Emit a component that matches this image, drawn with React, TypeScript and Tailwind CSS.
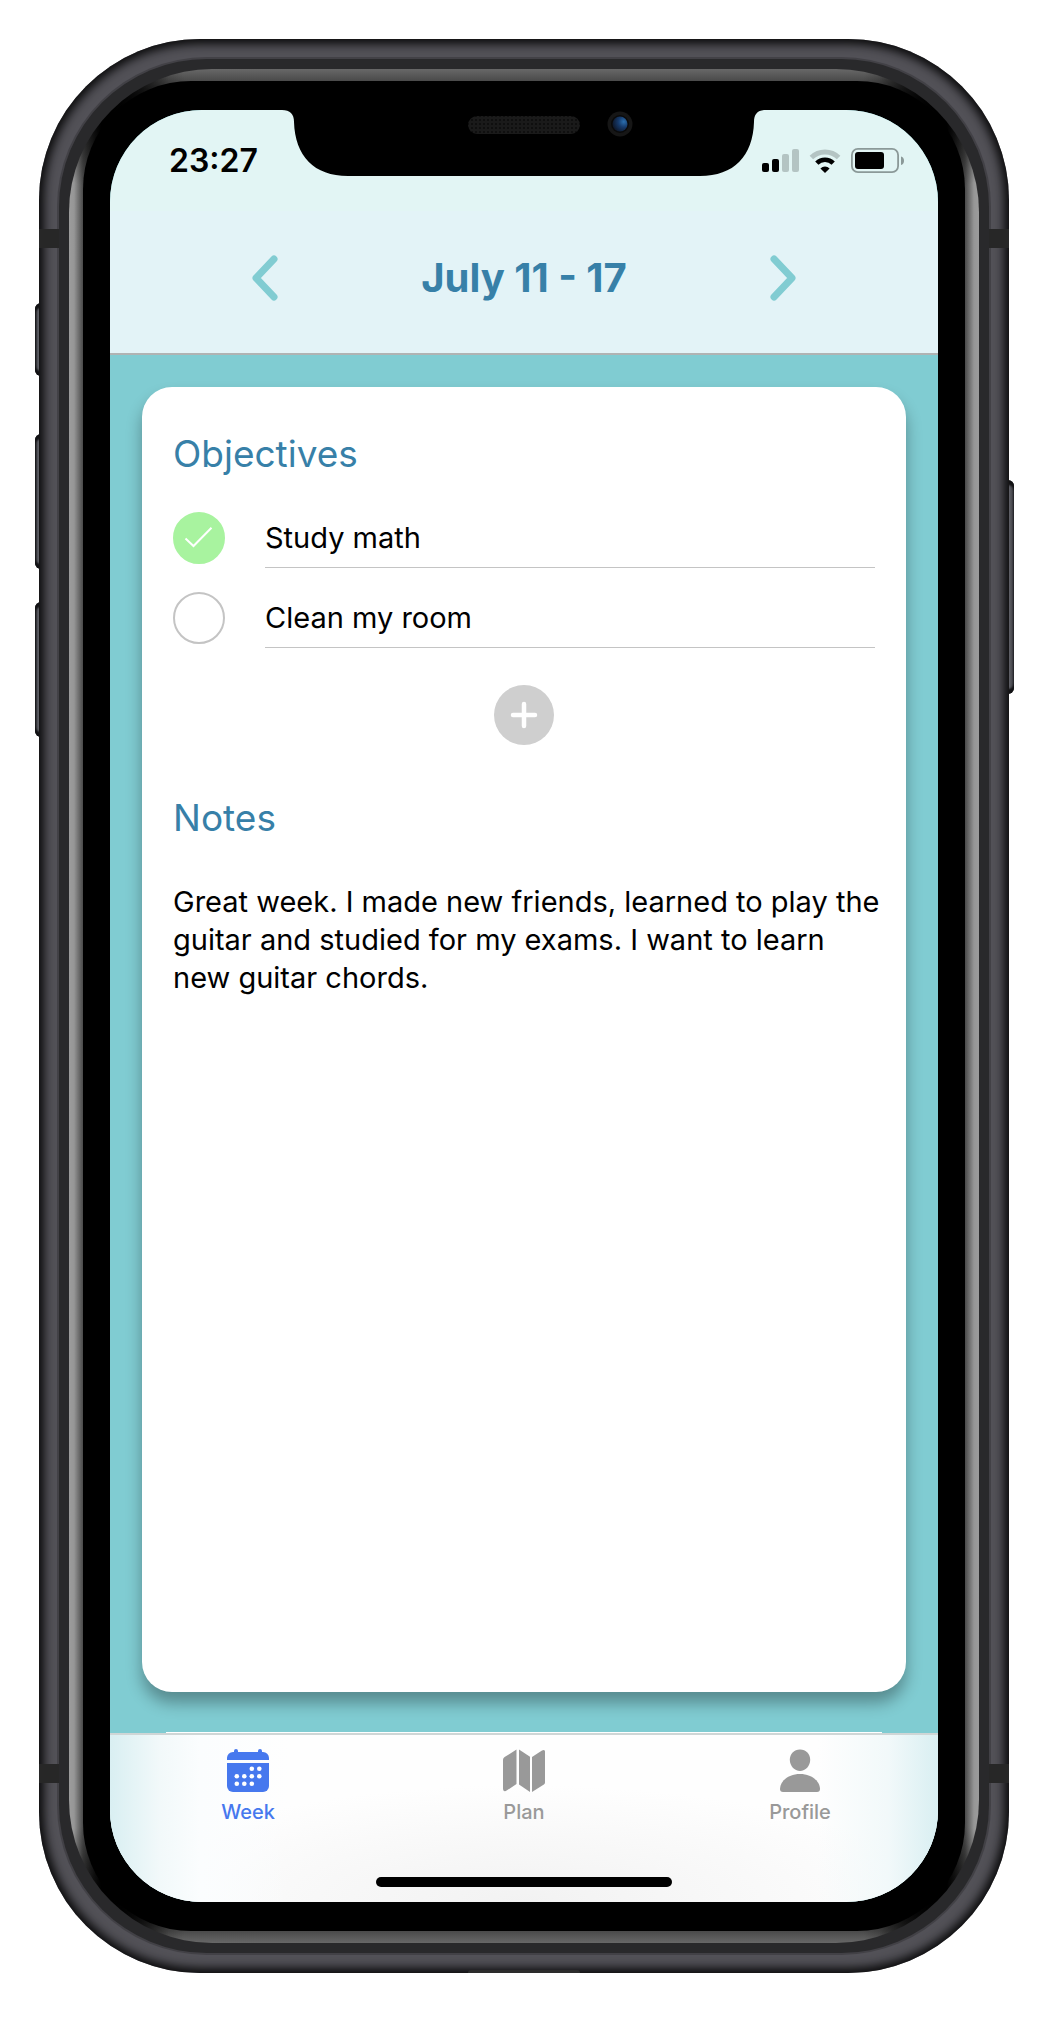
import { useState } from "react";
import type { ReactNode } from "react";

function SignalIcon() {
  return (
    <svg width="37" height="23" viewBox="0 0 37 23" aria-label="Signal">
      <rect x="0" y="14" width="7" height="9" rx="2" fill="#000" />
      <rect x="10" y="10" width="7" height="13" rx="2" fill="#000" />
      <rect x="20" y="5" width="7" height="18" rx="2" fill="#b4c4c3" />
      <rect x="30" y="0" width="7" height="23" rx="2" fill="#b4c4c3" />
    </svg>
  );
}

function WifiIcon() {
  return (
    <svg width="32" height="24" viewBox="0 0 32 24" aria-label="Wi-Fi">
      <path d="M2.4 8.6a19.3 19.3 0 0 1 27.2 0" fill="none" stroke="#b4c4c3" strokeWidth="5" />
      <path d="M7.8 14.2a11.6 11.6 0 0 1 16.4 0" fill="none" stroke="#000" strokeWidth="4.6" />
      <path d="M16 24l-4.6-4.6a6.5 6.5 0 0 1 9.2 0z" fill="#000" />
    </svg>
  );
}

function BatteryIcon() {
  return (
    <svg width="53" height="25" viewBox="0 0 53 25" aria-label="Battery">
      <rect x="0.9" y="0.9" width="46.2" height="23.2" rx="6" fill="none" stroke="#8b9998" strokeWidth="1.8" />
      <rect x="4" y="4" width="29" height="17" rx="3" fill="#000" />
      <path d="M50 8.5c4 1 4 7.500 0 8.500z" fill="#8b9998" />
    </svg>
  );
}

function Notch() {
  return (
    <svg className="absolute inset-x-0 top-0 mx-auto" width="484" height="66" viewBox="0 0 484 66" aria-hidden="true">
      <defs>
        <pattern id="mesh" width="4" height="4" patternUnits="userSpaceOnUse">
          <rect width="4" height="4" fill="#1a1a1a" />
          <circle cx="2" cy="2" r="1.100" fill="#0c0c0c" />
        </pattern>
        <radialGradient id="lens" cx="0.75" cy="0.35" r="0.8">
          <stop offset="0" stopColor="#2b6fae" />
          <stop offset="0.45" stopColor="#163a6b" />
          <stop offset="1" stopColor="#0d1526" />
        </radialGradient>
      </defs>
      <path d="M0 0C8 0 12 4 12 12C13 46 32 66 66 66H418C452 66 471 46 472 12C472 4 476 0 484 0Z" />
      <rect x="186" y="6" width="112" height="18" rx="9" fill="url(#mesh)" />
      <circle cx="338" cy="14" r="12.500" fill="#161616" />
      <circle cx="338" cy="14" r="9" fill="#0a0a0a" />
      <circle cx="338" cy="14" r="7.500" fill="url(#lens)" />
    </svg>
  );
}

function Chevron({ points }: { points: string }) {
  return (
    <svg width="26" height="46" viewBox="0 0 26 46" aria-hidden="true">
      <polyline points={points} fill="none" stroke="#81ccd2" strokeWidth="7" strokeLinecap="round" strokeLinejoin="round" />
    </svg>
  );
}

const calendarDots = [
  [25, 19], [32.5, 19],
  [10, 26.500], [17.500, 26.500], [25, 26.500], [32.500, 26.500],
  [10, 34], [17.500, 34], [25, 34],
];

function CalendarIcon() {
  return (
    <svg width="44" height="44" viewBox="0 0 44 44" fill="currentColor" aria-hidden="true">
      <path d="M1 11V9a6 6 0 0 1 6-6h1V2a2 2 0 0 1 4 0v1h20V2a2 2 0 0 1 4 0v1h1a6 6 0 0 1 6 6v2z" />
      <path d="M1 14h42v23a6 6 0 0 1-6 6H7a6 6 0 0 1-6-6z" />
      {calendarDots.map(([x, y]) => (
        <circle key={`${x}-${y}`} cx={x + 0.800} cy={y + 0.800} r="2.300" fill="#fff" />
      ))}
    </svg>
  );
}

function MapIcon() {
  return (
    <svg width="44" height="44" viewBox="0 0 44 44" fill="currentColor" aria-hidden="true">
      <path d="M14.500 0.500V35L5 41.300C2.500 43 1 42 1 39.500V11.500C1 9.500 1.500 8.800 3 7.800z" />
      <path d="M17 0.500L28 7.800V43L17 35.500z" />
      <path d="M30 43V8L40 1.600C42 .5 43 1.200 43 3V33C43 34.500 42.500 35 41.500 35.700z" />
    </svg>
  );
}

function PersonIcon() {
  return (
    <svg width="44" height="44" viewBox="0 0 44 44" fill="currentColor" aria-hidden="true">
      <path d="M22 0.500c6 0 10.200 4.500 10.200 10.300C32.200 17 27.500 22 22 22S11.800 17 11.800 10.800C11.800 5 16 .5 22 .5z" />
      <path d="M22 25c12 0 20 7.500 20 15 0 2-1 3-3 3H5c-2 0-3-1-3-3 0-7.500 8-15 20-15z" />
    </svg>
  );
}

function Objective({ label, initial }: { label: string; initial: boolean }) {
  const [done, setDone] = useState(initial);
  const [text, setText] = useState(label);
  return (
    <li className="flex items-start gap-10">
      <span className="relative grid size-13 shrink-0">
        <input
          type="checkbox"
          aria-label={text}
          checked={done}
          onChange={() => setDone(!done)}
          className="size-13 appearance-none rounded-full border-2 border-[#c4c4c4] bg-white checked:border-[#a8f39f] checked:bg-[#a8f39f]"
        />
        {done && (
          <svg className="pointer-events-none absolute inset-0" width="52" height="52" viewBox="0 0 52 52" aria-hidden="true">
            <path d="M12.500 26.500l8 7.500L38.500 15.800" fill="none" stroke="#fff" strokeWidth="2" />
          </svg>
        )}
      </span>
      <input
        type="text"
        aria-label="Objective"
        value={text}
        onChange={(e) => setText(e.target.value)}
        className="h-14 min-w-0 flex-1 border-b border-[#c4c4c4] bg-transparent pb-1 text-[29px] text-black outline-none"
      />
    </li>
  );
}

function Tab({ icon, label, active = false }: { icon: ReactNode; label: string; active?: boolean }) {
  return (
    <a
      href={`#${label.toLowerCase()}`}
      aria-current={active ? "page" : undefined}
      className={`flex flex-1 flex-col items-center gap-[7px] ${active ? "text-[#4678ee]" : "text-[#999999]"}`}
    >
      {icon}
      <span className="text-xl leading-6 font-medium">{label}</span>
    </a>
  );
}

function SideButton({ className }: { className: string }) {
  return (
    <span
      aria-hidden="true"
      className={`absolute w-2 bg-[linear-gradient(to_right,#1b1b1d,#5f6067_40%,#3a3a3e)] shadow-[inset_0_5px_2px_#121214,inset_0_-5px_2px_#121214] ${className}`}
    />
  );
}

function AntennaLine({ className }: { className: string }) {
  return <span aria-hidden="true" className={`absolute h-[19px] w-5 bg-[#272727] ${className}`} />;
}

export default function App() {
  return (
    <div className="bg-white p-[39px] font-[Inter,sans-serif] text-black">
      <div className="relative">
        <SideButton className="top-[264px] -left-1 h-[73px] rounded-l-md" />
        <SideButton className="top-[395px] -left-1 h-[135px] rounded-l-md" />
        <SideButton className="top-[563px] -left-1 h-[135px] rounded-l-md" />
        <SideButton className="top-[441px] -right-[5px] h-[214px] rounded-r-md" />

        <div className="relative rounded-[161px] bg-[#525157] p-5 shadow-[inset_0_0_10px_5px_#0b0b0c]">
          <span className="absolute inset-x-0 bottom-0 mx-auto h-[3px] w-[112px] rounded-t-full bg-[#2c2c2c]" />

          <div className="relative rounded-[148px] bg-[#29292b] p-2.5 shadow-[0_0_0_2px_#424146]">
            <div className="rounded-[143px] bg-[radial-gradient(circle_at_36px_36px,#000000cc,transparent_84px),radial-gradient(circle_at_calc(100%-36px)_36px,#000000cc,transparent_84px),radial-gradient(circle_at_36px_calc(100%-36px),#000000cc,transparent_84px),radial-gradient(circle_at_calc(100%-36px)_calc(100%-36px),#000000cc,transparent_84px),linear-gradient(to_right,#9c9c9c,#969696_5px,#4a4a4a_14px,#000_32px,#000_44px,transparent_100px,transparent_calc(100%-100px),#000_calc(100%-44px),#000_calc(100%-32px),#4a4a4a_calc(100%-14px),#969696_calc(100%-5px),#9c9c9c),linear-gradient(to_bottom,#686868,#4a4a4a_12px,#111_40px,#111_calc(100%-40px),#4a4a4a_calc(100%-12px),#686868)] px-3.5 py-3">
              <div className="rounded-[108px] bg-black px-[27px] py-[29px]">
                <div className="relative flex flex-col overflow-hidden rounded-[92px] bg-[#80ccd2]">
                  <Notch />

                  <div className="flex h-[101px] items-center justify-between bg-[#e2f5f4] pr-[34px] pl-[59px]">
                    <time className="text-[32px] font-semibold">23:27</time>
                    <div className="flex items-center gap-2.5">
                      <SignalIcon />
                      <WifiIcon />
                      <BatteryIcon />
                    </div>
                  </div>

                  <header className="flex h-36 items-center justify-between border-b-2 border-[#b0b3b3] bg-[#e3f3f7] px-[142px] pb-2">
                    <button type="button" aria-label="Previous week">
                      <Chevron points="22,4 4,23 22,42" />
                    </button>
                    <h1 className="text-[40px] font-bold text-[#3780a8]">July 11 - 17</h1>
                    <button type="button" aria-label="Next week">
                      <Chevron points="4,4 22,23 4,42" />
                    </button>
                  </header>

                  <main className="flex flex-col gap-10 px-8 pt-8">
                    <article className="min-h-[1305px] rounded-[30px] bg-white px-[31px] pt-[43px] pb-8 shadow-[0_11px_16px_rgba(0,0,0,0.32)]">
                      <h2 className="text-[37px] leading-12 text-[#3780a8]">Objectives</h2>
                      <ul className="mt-[34px] flex flex-col gap-6">
                        <Objective label="Study math" initial={true} />
                        <Objective label="Clean my room" initial={false} />
                      </ul>
                      <button type="button" aria-label="Add objective" className="mx-auto mt-[37px] grid size-15 place-items-center rounded-full bg-[#cfcfcf]">
                        <svg width="28" height="28" viewBox="0 0 28 28" aria-hidden="true">
                          <path d="M14 3v22M3 14h22" stroke="#fff" strokeWidth="4.500" strokeLinecap="round" />
                        </svg>
                      </button>
                      <h2 className="mt-[49px] text-[37px] leading-12 text-[#3780a8]">Notes</h2>
                      <p className="-mr-2 mt-[41px] text-[29px] leading-[38px]">
                        Great week. I made new friends, learned to play the guitar and studied for my exams. I want to learn new guitar chords.
                      </p>
                    </article>
                    <div className="mx-6 h-px bg-white" />
                  </main>

                  <nav className="flex flex-col border-t-2 border-[#cfd6d6] bg-[linear-gradient(to_right,#d9eff2,#f2f9fa_50px,#fbfdfe_90px,transparent_180px,transparent_calc(100%-120px),#f2f9fa_calc(100%-50px),#d9eff2),radial-gradient(ellipse_50%_70%_at_50%_100%,#f2f2f2,#fefefe)] pt-3.5">
                    <div className="flex">
                      <Tab icon={<CalendarIcon />} label="Week" active />
                      <Tab icon={<MapIcon />} label="Plan" />
                      <Tab icon={<PersonIcon />} label="Profile" />
                    </div>
                    <div className="mx-auto mt-[53px] mb-[15px] h-2.5 w-[296px] rounded-full bg-black" />
                  </nav>
                </div>
              </div>
            </div>
          </div>

          <AntennaLine className="top-[190px] left-0" />
          <AntennaLine className="top-[190px] right-0" />
          <AntennaLine className="bottom-[190px] left-0" />
          <AntennaLine className="right-0 bottom-[190px]" />
        </div>
      </div>
    </div>
  );
}
